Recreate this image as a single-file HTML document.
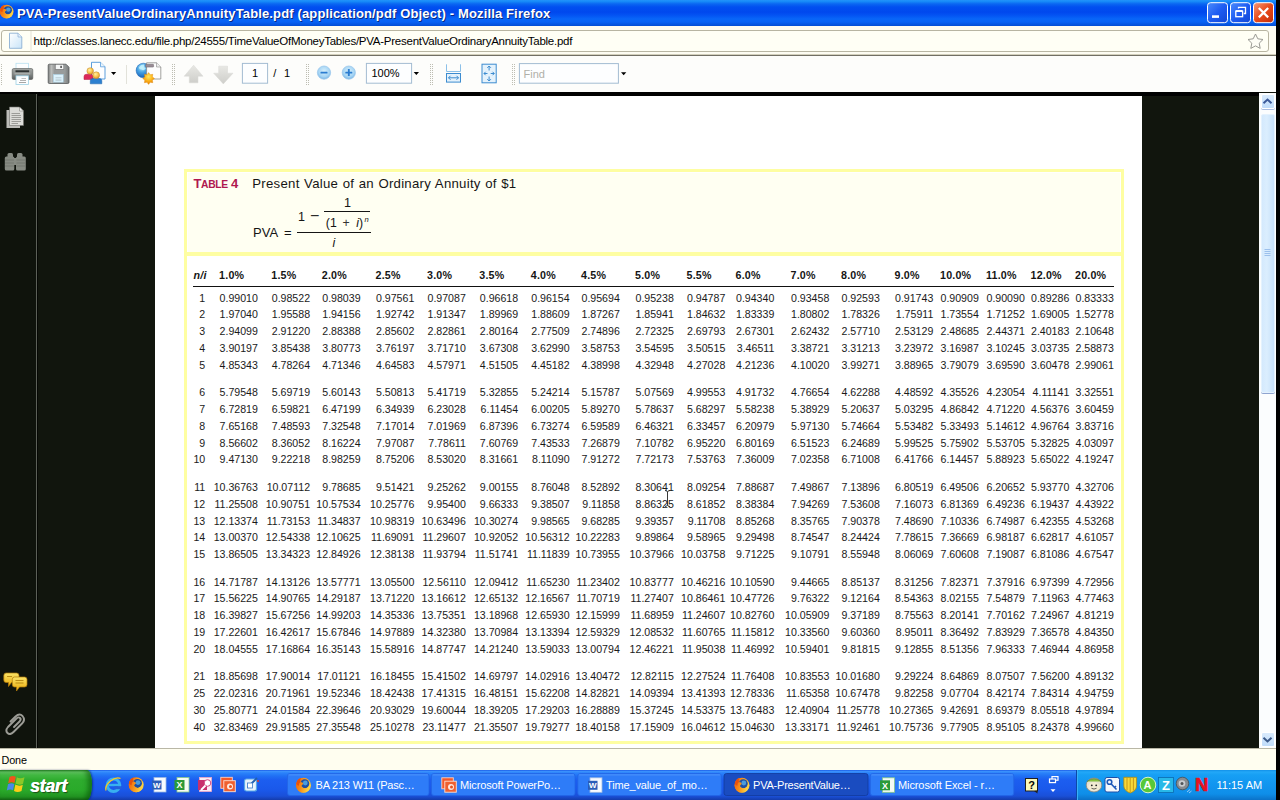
<!DOCTYPE html>
<html><head><meta charset="utf-8"><title>PVA-PresentValueOrdinaryAnnuityTable.pdf (application/pdf Object) - Mozilla Firefox</title>
<style>
*{box-sizing:border-box;margin:0;padding:0}
html,body{width:1280px;height:800px;overflow:hidden;background:#000;font-family:"Liberation Sans",sans-serif}
#root{position:absolute;left:0;top:0;width:1280px;height:800px;overflow:hidden;background:#000}
.abs{position:absolute}
svg{position:absolute;overflow:visible}
#titlebar{left:0;top:0;width:1276px;height:25.5px;background:linear-gradient(#2294fa 0,#178af8 1.5px,#0a66f2 4px,#0150f0 7px,#0048ee 12px,#0352f2 15px,#0866f8 19px,#0862f4 22px,#0450d8 25.5px)}
#title{left:17px;top:5.5px;color:#fff;font-weight:bold;font-size:13px;white-space:nowrap;line-height:16px;letter-spacing:0.14px;text-shadow:1px 1px 0 #0a2a80}
#urlbar{left:0;top:25.5px;width:1276px;height:30.5px;background:#fdfcf2;border-bottom:1.5px solid #716f64;box-shadow:inset 0 -1px 0 #d2cfbc}
#urlfield{left:1px;top:4.5px;width:1268px;height:22px;border:1px solid #b8b5a2;background:#fffff5;border-radius:3px}
#url{left:33.5px;top:8.5px;font-size:11.5px;color:#000;white-space:nowrap;line-height:14px;letter-spacing:-0.25px}
#toolbar{left:0;top:56px;width:1276px;height:36px;background:#fdfdfb}
#content{left:0;top:92px;width:1276px;height:656px;background:#11150d}
#page{left:154.8px;top:3.7px;width:986.9px;height:652.3px;background:#fff}
#status{left:0;top:748px;width:1276px;height:22px;background:#fffef0;border-top:1px solid #b9b7a6}
#taskbar{left:0;top:770px;width:1276px;height:30px;background:linear-gradient(#1c5ce8 0,#3a90fc 1.5px,#2a82fa 3px,#2070f4 6px,#1c5ef0 10px,#1a58ea 20px,#1a50d8 26px,#143cac 30px)}
/* pdf */
.ybox{left:184px;top:168.8px;width:940px;height:575.2px;border:3.8px solid #fefea2;background:#fff}
.yhead{left:187.8px;top:172.6px;width:932.4px;height:80px;background:#fffff2}
.yband{left:184px;top:252px;width:940px;height:4px;background:#fefea2}
.hdr{position:absolute;left:0;top:0}
.h{position:absolute;top:268px;font-weight:bold;font-size:10.7px;line-height:15px;white-space:nowrap;color:#151515;letter-spacing:0.2px}
.rule{position:absolute;left:192.5px;top:285.7px;width:921px;height:1.3px;background:#111}
.r{position:absolute;left:0;width:1280px;height:15px;font-size:10.6px;line-height:15px;color:#1a1a1a}
.r span{position:absolute;top:0;white-space:nowrap;text-align:right}
.r .n{left:165.2px;width:40px}
.r .v{width:60px}
.t{position:absolute;white-space:nowrap;line-height:1}
.tb{font-size:11px;color:#fff;line-height:12px}
</style></head><body><div id="root">
<div id="titlebar" class="abs"><div id="title" class="abs">PVA-PresentValueOrdinaryAnnuityTable.pdf (application/pdf Object) - Mozilla Firefox</div></div>
<div id="urlbar" class="abs"><div id="urlfield" class="abs"></div><div id="url" class="abs">http://classes.lanecc.edu/file.php/24555/TimeValueOfMoneyTables/PVA-PresentValueOrdinaryAnnuityTable.pdf</div></div>
<div id="toolbar" class="abs"><svg width="1276" height="36" viewBox="0 56 1276 36" style="left:0;top:0">
<defs>
<linearGradient id="gbody" x1="0" y1="0" x2="0" y2="1"><stop offset="0" stop-color="#a4a8a6"/><stop offset="0.5" stop-color="#868a89"/><stop offset="1" stop-color="#585c5c"/></linearGradient>
<linearGradient id="gflop" x1="0" y1="0" x2="1" y2="0"><stop offset="0" stop-color="#7c7e7e"/><stop offset="0.15" stop-color="#bcbebc"/><stop offset="0.3" stop-color="#989a9a"/><stop offset="0.8" stop-color="#989c9c"/><stop offset="1" stop-color="#787a7a"/></linearGradient>
<radialGradient id="gglobe" cx="0.4" cy="0.3" r="0.7"><stop offset="0" stop-color="#b8ecfc"/><stop offset="0.45" stop-color="#48a4e4"/><stop offset="1" stop-color="#1660b8"/></radialGradient>
<radialGradient id="gstar" cx="0.5" cy="0.35" r="0.6"><stop offset="0" stop-color="#ffe860"/><stop offset="0.6" stop-color="#fbb018"/><stop offset="1" stop-color="#e88808"/></radialGradient>
<radialGradient id="ghead" cx="0.4" cy="0.35" r="0.7"><stop offset="0" stop-color="#fff0a0"/><stop offset="0.6" stop-color="#f8c048"/><stop offset="1" stop-color="#d89028"/></radialGradient>
<radialGradient id="gzoom" cx="0.5" cy="0.4" r="0.6"><stop offset="0" stop-color="#d8f0fc"/><stop offset="0.7" stop-color="#a4d4f4"/><stop offset="1" stop-color="#78b4e4"/></radialGradient>
<linearGradient id="garr" x1="0" y1="0" x2="0" y2="1"><stop offset="0" stop-color="#e8e8e4"/><stop offset="1" stop-color="#cececa"/></linearGradient>
<pattern id="grip" width="2" height="2" patternUnits="userSpaceOnUse"><rect width="1" height="1" fill="#b8b8ae"/></pattern>
</defs>
<!-- grips -->
<g fill="#bdbdb2">
<g id="gp"><rect x="1" y="64" width="1" height="1"/><rect x="1" y="66" width="1" height="1"/><rect x="1" y="68" width="1" height="1"/><rect x="1" y="70" width="1" height="1"/><rect x="1" y="72" width="1" height="1"/><rect x="1" y="74" width="1" height="1"/><rect x="1" y="76" width="1" height="1"/><rect x="1" y="78" width="1" height="1"/><rect x="1" y="80" width="1" height="1"/><rect x="1" y="82" width="1" height="1"/><rect x="1" y="84" width="1" height="1"/></g>
<use href="#gp" x="171"/><use href="#gp" x="173"/><use href="#gp" x="305"/><use href="#gp" x="307"/><use href="#gp" x="429"/><use href="#gp" x="431"/><use href="#gp" x="511"/><use href="#gp" x="513"/>
</g>
<!-- printer -->
<rect x="16" y="63.3" width="12.4" height="7" fill="#fdfeff" stroke="#b8e0f0" stroke-width="0.8"/>
<rect x="12.2" y="68.5" width="20.6" height="11" rx="1.5" fill="url(#gbody)" stroke="#555958" stroke-width="0.6"/>
<rect x="15.5" y="70.3" width="13.6" height="2.2" fill="#2e3232"/>
<rect x="14.5" y="72.5" width="15.8" height="2" fill="#a8acaa"/>
<rect x="16" y="75.8" width="12.4" height="8.7" fill="#fdfeff" stroke="#9cd0e4" stroke-width="0.8"/>
<rect x="21.5" y="78" width="4.5" height="0.8" fill="#b0b0b0"/><rect x="20" y="80" width="6" height="0.8" fill="#a0a0a0"/><rect x="19" y="82" width="7" height="0.8" fill="#909090"/>
<!-- floppy -->
<path d="M49.2 64.2 H66 L69 67.2 V82.3 Q69 83.5 67.8 83.5 H49.2 Q48.2 83.5 48.2 82.3 V65.4 Q48.2 64.2 49.2 64.2Z" fill="url(#gflop)" stroke="#55595a" stroke-width="0.8"/>
<rect x="55.3" y="64.4" width="8.5" height="4.9" fill="#f4f6f6" stroke="#666" stroke-width="0.5"/><rect x="60.3" y="65.8" width="1.6" height="2.2" fill="#555"/>
<rect x="53.4" y="74.5" width="9.8" height="7.6" fill="#dcf2fc" stroke="#a8d4ec" stroke-width="0.5"/><rect x="55.5" y="77.5" width="6" height="0.7" fill="#a8b8c0"/><rect x="55.5" y="79.7" width="6" height="0.7" fill="#98a8b0"/>
<!-- people+doc -->
<path d="M91.5 62.3 H100.5 L105 66.8 V79 H91.5Z" fill="#fdfeff" stroke="#4a94d8" stroke-width="0.9"/><path d="M100.5 62.3 V66.8 H105" fill="#e8f4fc" stroke="#4a94d8" stroke-width="0.7"/>
<path d="M84 79.5 V76.5 Q84 74.3 86.5 74.3 H91 Q93 74.3 93 76.5 V79.5Z" fill="#dc2858" stroke="#b01840" stroke-width="0.5"/>
<circle cx="90.2" cy="71" r="3.3" fill="url(#ghead)" stroke="#c08830" stroke-width="0.5"/>
<path d="M90.3 83.8 V80.8 Q90.3 78.6 92.8 78.6 H99.5 Q101.8 78.6 101.8 80.8 V83.8Z" fill="#2c80d0" stroke="#1860a8" stroke-width="0.5"/>
<circle cx="96.2" cy="75.2" r="3.4" fill="url(#ghead)" stroke="#c08830" stroke-width="0.5"/>
<path d="M111 72 H116.2 L113.6 75Z" fill="#000"/>
<rect x="126" y="65" width="1" height="19" fill="#e2e2da"/>
<!-- globe/window/star -->
<circle cx="143.4" cy="70.5" r="7.3" fill="url(#gglobe)" stroke="#1a60b0" stroke-width="0.5"/>
<path d="M138.8 67.4 q2.200-3.300 5.500-2.800 q-1 2.800 1.500 3.800 q-2 2.800-4.300 1.200 q-2.200 0-2.700-2.200z" fill="#c8f4fc" opacity="0.8"/>
<path d="M146.6 62.8 H156.5 L160.8 67 V79 H146.6Z" fill="#fefefe" stroke="#8a8a88" stroke-width="0.8"/><path d="M156.5 62.8 V67 H160.8" fill="#eee" stroke="#8a8a88" stroke-width="0.6"/>
<rect x="145.6" y="64.3" width="8" height="2.8" rx="0.6" fill="#9a8c96" stroke="#6a6468" stroke-width="0.5"/>
<path d="M148.6 72.6 l1.6 2.1 2.6-0.4 -0.4 2.6 2.1 1.6 -2.1 1.6 0.4 2.6 -2.6-0.4 -1.6 2.1 -1.6-2.1 -2.6 0.4 0.4-2.6 -2.1-1.6 2.1-1.6 -0.4-2.6 2.6 0.4z" fill="url(#gstar)" stroke="#e08808" stroke-width="0.4"/>
<!-- arrows up/down -->
<path d="M193.6 65.2 L203 76.2 H198 V82.8 H189.3 V76.2 H184.2Z" fill="url(#garr)" stroke="#d8d8d4" stroke-width="0.5"/>
<path d="M223.3 83.9 L233 73.2 H227.5 V66.2 H218.7 V73.2 H213.7Z" fill="url(#garr)" stroke="#d8d8d4" stroke-width="0.5"/>
<!-- page box -->
<rect x="242.4" y="63.4" width="25.2" height="19.8" fill="#fdfeff" stroke="#a3bcd2" stroke-width="1"/>
<!-- zoom circles -->
<circle cx="324" cy="72.6" r="6.6" fill="url(#gzoom)" stroke="#9cc8ec" stroke-width="0.8"/><rect x="320.5" y="71.7" width="7" height="1.9" rx="0.5" fill="#2a7cd0"/>
<circle cx="348.8" cy="72.6" r="6.6" fill="url(#gzoom)" stroke="#9cc8ec" stroke-width="0.8"/><rect x="345.3" y="71.7" width="7" height="1.9" rx="0.5" fill="#2a7cd0"/><rect x="347.85" y="69.1" width="1.9" height="7" rx="0.5" fill="#2a7cd0"/>
<!-- zoom box -->
<rect x="366.4" y="63.4" width="45.2" height="19.8" fill="#fdfeff" stroke="#a3bcd2" stroke-width="1"/>
<path d="M413.7 72 H419 L416.35 75Z" fill="#000"/>
<!-- fit width -->
<g stroke="#3c8cd0" fill="none" stroke-width="1"><path d="M446.5 64.3 V71.5 H460.5 V64.3" stroke="#8cc0e8"/><rect x="446.5" y="73.5" width="14" height="8.6" fill="#e4f2fc"/><path d="M448.5 77.8 H458.5 M450.5 75.8 L448.5 77.8 L450.5 79.8 M456.5 75.8 L458.5 77.8 L456.5 79.8"/></g>
<!-- fit page -->
<g stroke="#3c8cd0" fill="none" stroke-width="1"><rect x="482" y="64.2" width="14.2" height="18.6" fill="#e4f2fc"/><path d="M489.1 66 V70.5 M487.3 67.8 L489.1 66 L490.9 67.8 M489.1 81 V76.5 M487.3 79.2 L489.1 81 L490.9 79.2 M484 73.5 H487.5 M485.6 71.8 L484 73.5 L485.6 75.2 M494.2 73.5 H490.7 M492.6 71.8 L494.2 73.5 L492.6 75.2"/></g>
<!-- find box -->
<rect x="519.4" y="63.6" width="99" height="19.6" fill="#fdfeff" stroke="#a3bcd2" stroke-width="1"/>
<path d="M621 72.3 H626.3 L623.65 75.3Z" fill="#000"/>
</svg>
<div class="t" style="left:252px;top:10.3px;font-size:11px;color:#000;line-height:14px">1</div>
<div class="t" style="left:273.3px;top:10.3px;font-size:11px;color:#000;line-height:14px;word-spacing:4.5px">/ 1</div>
<div class="t" style="left:371.5px;top:10.3px;font-size:11px;color:#000;line-height:14px">100%</div>
<div class="t" style="left:523.5px;top:11px;font-size:11px;color:#b0b0a8;line-height:14px">Find</div>
</div>
<div id="content" class="abs"><div id="page" class="abs"></div><div class="abs" style="left:0;top:0;width:36px;height:656px;background:#0f130c"></div>
<div class="abs" style="left:36px;top:0;width:1px;height:656px;background:#5c6058"></div>
<div class="abs" style="left:37px;top:0;width:1222px;height:3.7px;background:#000"></div><div class="abs" style="left:0;top:0;width:37px;height:1.5px;background:#000"></div><div class="abs" style="left:37px;top:0;width:1px;height:656px;background:#050704"></div>
<svg width="36" height="656" viewBox="0 92 36 656" style="left:0;top:0">
<!-- pages -->
<path d="M6.5 110 H17 L20 113 V128 H6.5Z" fill="#bcbcb8"/>
<path d="M9.5 107 H19.5 L23.5 111 V125.5 H9.5Z" fill="#dcdcd8" stroke="#70706c" stroke-width="0.6"/>
<path d="M19.5 107 V111 H23.5Z" fill="#f4f4f0" stroke="#70706c" stroke-width="0.5"/>
<g stroke="#8c8c88" stroke-width="0.8"><path d="M11.5 113.5H20M11.5 115.5H21M11.5 117.5H21M11.5 119.5H21M11.5 121.5H21M11.5 123.5H18"/></g>
<!-- binoculars -->
<g fill="#878b83">
<rect x="7.5" y="153" width="5.5" height="5" rx="1.5"/><rect x="17" y="153" width="5.5" height="5" rx="1.5"/>
<rect x="4.8" y="156.5" width="9.5" height="14" rx="1.5"/><rect x="16" y="156.5" width="9.8" height="14" rx="1.5"/>
<rect x="13" y="158" width="4" height="7"/>
</g>
<g stroke="#6c7068" stroke-width="0.7"><path d="M5 160H14M5 163H14M5 166H14M16.5 160H25.5M16.5 163H25.5M16.5 166H25.5"/></g>
<!-- comments -->
<defs><linearGradient id="gcm" x1="0" y1="0" x2="0" y2="1"><stop offset="0" stop-color="#fce468"/><stop offset="1" stop-color="#e8a808"/></linearGradient></defs>
<path d="M6 673 H16.5 Q19 673 19 675.5 V680 Q19 682.5 16.5 682.5 H11.5 L8.5 686.5 V682.5 H6 Q3.8 682.5 3.8 680 V675.5 Q3.8 673 6 673Z" fill="url(#gcm)" stroke="#b07808" stroke-width="0.7"/>
<path d="M14.5 677 H24.5 Q27 677 27 679.5 V684.5 Q27 687 24.5 687 H19.5 L16.5 691 V687 H14.5 Q12.3 687 12.3 684.5 V679.5 Q12.3 677 14.5 677Z" fill="url(#gcm)" stroke="#b07808" stroke-width="0.7"/>
<path d="M15.5 680.5H23.5M15.5 683H23.5" stroke="#a87808" stroke-width="0.8"/>
<path d="M7 676.5H12" stroke="#a87808" stroke-width="0.8"/>
<!-- paperclip -->
<path d="M14 727 L19.5 721.5 Q21.5 719.5 20 718 Q18.5 716.5 16.500 718.5 L8 727 Q5 730.5 7.500 733 Q10 735.500 13.500 732 L22.500 723 Q25.500 719.500 22.500 716.000 Q19.500 713.000 15.500 716.500 L10.500 721.500" fill="none" stroke="#9c9c96" stroke-width="1.9" stroke-linecap="round"/>
</svg>
</div>
<div class="abs ybox"></div><div class="abs yhead"></div><div class="abs yband"></div>
<div id="pdf" class="abs" style="left:0;top:0">
<div class="t" id="tbl4" style="left:193.5px;top:176.5px;font-size:13px;font-weight:bold;color:#b0184f;line-height:14px;letter-spacing:-0.35px">T<span style="font-size:10.3px">ABLE</span> 4</div>
<div class="t" id="ttl" style="left:252.3px;top:176.5px;font-size:13.2px;color:#151515;line-height:14px;letter-spacing:0.26px;word-spacing:0.6px">Present Value of an Ordinary Annuity of $1</div>
<div class="t" id="pva" style="left:253px;top:226px;font-size:13px;color:#151515;line-height:14px;word-spacing:3px">PVA =</div>
<div class="abs" style="left:297px;top:231.7px;width:73.7px;height:1.4px;background:#151515"></div>
<div class="t" id="onem" style="left:298px;top:209.5px;font-size:12.6px;color:#151515;line-height:14px">1</div>
<div class="t" id="minus" style="left:310px;top:206.6px;font-size:16px;color:#2a2a2a;line-height:18px">−</div>
<div class="t" id="one" style="left:343.9px;top:196px;font-size:12.6px;color:#151515;line-height:14px">1</div>
<div class="abs" style="left:324.2px;top:210.8px;width:45.9px;height:1.4px;background:#151515"></div>
<div class="t" id="den" style="left:325.8px;top:215.5px;font-size:12.3px;color:#151515;line-height:14px">(1</div>
<div class="t" id="denp" style="left:342.5px;top:215.5px;font-size:12.3px;color:#333;line-height:14px">+</div>
<div class="t" id="deni2" style="left:356.3px;top:215.5px;font-size:12.3px;color:#151515;line-height:14px"><i>i</i>)</div>
<div class="t" id="denn" style="left:364.5px;top:215px;font-size:7.6px;color:#151515;line-height:10px;font-style:italic">n</div>
<div class="t" id="deni" style="left:332.5px;top:236px;font-size:12.3px;color:#151515;line-height:14px;font-style:italic">i</div>

<div class="hdr"><span class="h hi" style="left:193.5px"><i>n/i</i></span><span class="h" style="left:219.10px">1.0%</span><span class="h" style="left:271.25px">1.5%</span><span class="h" style="left:321.75px">2.0%</span><span class="h" style="left:375.50px">2.5%</span><span class="h" style="left:427.00px">3.0%</span><span class="h" style="left:479.30px">3.5%</span><span class="h" style="left:530.75px">4.0%</span><span class="h" style="left:581.00px">4.5%</span><span class="h" style="left:635.00px">5.0%</span><span class="h" style="left:686.50px">5.5%</span><span class="h" style="left:735.50px">6.0%</span><span class="h" style="left:790.50px">7.0%</span><span class="h" style="left:841.00px">8.0%</span><span class="h" style="left:894.50px">9.0%</span><span class="h" style="left:940.00px">10.0%</span><span class="h" style="left:986.00px">11.0%</span><span class="h" style="left:1030.50px">12.0%</span><span class="h" style="left:1075.00px">20.0%</span></div>
<div class="rule"></div>
<div class="r" style="top:291.00px"><span class="n">1</span><span class="v" style="left:197.90px">0.99010</span><span class="v" style="left:250.05px">0.98522</span><span class="v" style="left:300.55px">0.98039</span><span class="v" style="left:354.30px">0.97561</span><span class="v" style="left:405.80px">0.97087</span><span class="v" style="left:458.10px">0.96618</span><span class="v" style="left:509.55px">0.96154</span><span class="v" style="left:559.80px">0.95694</span><span class="v" style="left:613.80px">0.95238</span><span class="v" style="left:665.30px">0.94787</span><span class="v" style="left:714.30px">0.94340</span><span class="v" style="left:769.30px">0.93458</span><span class="v" style="left:819.80px">0.92593</span><span class="v" style="left:873.30px">0.91743</span><span class="v" style="left:918.80px">0.90909</span><span class="v" style="left:964.80px">0.90090</span><span class="v" style="left:1009.30px">0.89286</span><span class="v" style="left:1053.80px">0.83333</span></div>
<div class="r" style="top:307.00px"><span class="n">2</span><span class="v" style="left:197.90px">1.97040</span><span class="v" style="left:250.05px">1.95588</span><span class="v" style="left:300.55px">1.94156</span><span class="v" style="left:354.30px">1.92742</span><span class="v" style="left:405.80px">1.91347</span><span class="v" style="left:458.10px">1.89969</span><span class="v" style="left:509.55px">1.88609</span><span class="v" style="left:559.80px">1.87267</span><span class="v" style="left:613.80px">1.85941</span><span class="v" style="left:665.30px">1.84632</span><span class="v" style="left:714.30px">1.83339</span><span class="v" style="left:769.30px">1.80802</span><span class="v" style="left:819.80px">1.78326</span><span class="v" style="left:873.30px">1.75911</span><span class="v" style="left:918.80px">1.73554</span><span class="v" style="left:964.80px">1.71252</span><span class="v" style="left:1009.30px">1.69005</span><span class="v" style="left:1053.80px">1.52778</span></div>
<div class="r" style="top:324.00px"><span class="n">3</span><span class="v" style="left:197.90px">2.94099</span><span class="v" style="left:250.05px">2.91220</span><span class="v" style="left:300.55px">2.88388</span><span class="v" style="left:354.30px">2.85602</span><span class="v" style="left:405.80px">2.82861</span><span class="v" style="left:458.10px">2.80164</span><span class="v" style="left:509.55px">2.77509</span><span class="v" style="left:559.80px">2.74896</span><span class="v" style="left:613.80px">2.72325</span><span class="v" style="left:665.30px">2.69793</span><span class="v" style="left:714.30px">2.67301</span><span class="v" style="left:769.30px">2.62432</span><span class="v" style="left:819.80px">2.57710</span><span class="v" style="left:873.30px">2.53129</span><span class="v" style="left:918.80px">2.48685</span><span class="v" style="left:964.80px">2.44371</span><span class="v" style="left:1009.30px">2.40183</span><span class="v" style="left:1053.80px">2.10648</span></div>
<div class="r" style="top:341.00px"><span class="n">4</span><span class="v" style="left:197.90px">3.90197</span><span class="v" style="left:250.05px">3.85438</span><span class="v" style="left:300.55px">3.80773</span><span class="v" style="left:354.30px">3.76197</span><span class="v" style="left:405.80px">3.71710</span><span class="v" style="left:458.10px">3.67308</span><span class="v" style="left:509.55px">3.62990</span><span class="v" style="left:559.80px">3.58753</span><span class="v" style="left:613.80px">3.54595</span><span class="v" style="left:665.30px">3.50515</span><span class="v" style="left:714.30px">3.46511</span><span class="v" style="left:769.30px">3.38721</span><span class="v" style="left:819.80px">3.31213</span><span class="v" style="left:873.30px">3.23972</span><span class="v" style="left:918.80px">3.16987</span><span class="v" style="left:964.80px">3.10245</span><span class="v" style="left:1009.30px">3.03735</span><span class="v" style="left:1053.80px">2.58873</span></div>
<div class="r" style="top:358.00px"><span class="n">5</span><span class="v" style="left:197.90px">4.85343</span><span class="v" style="left:250.05px">4.78264</span><span class="v" style="left:300.55px">4.71346</span><span class="v" style="left:354.30px">4.64583</span><span class="v" style="left:405.80px">4.57971</span><span class="v" style="left:458.10px">4.51505</span><span class="v" style="left:509.55px">4.45182</span><span class="v" style="left:559.80px">4.38998</span><span class="v" style="left:613.80px">4.32948</span><span class="v" style="left:665.30px">4.27028</span><span class="v" style="left:714.30px">4.21236</span><span class="v" style="left:769.30px">4.10020</span><span class="v" style="left:819.80px">3.99271</span><span class="v" style="left:873.30px">3.88965</span><span class="v" style="left:918.80px">3.79079</span><span class="v" style="left:964.80px">3.69590</span><span class="v" style="left:1009.30px">3.60478</span><span class="v" style="left:1053.80px">2.99061</span></div>
<div class="r" style="top:385.00px"><span class="n">6</span><span class="v" style="left:197.90px">5.79548</span><span class="v" style="left:250.05px">5.69719</span><span class="v" style="left:300.55px">5.60143</span><span class="v" style="left:354.30px">5.50813</span><span class="v" style="left:405.80px">5.41719</span><span class="v" style="left:458.10px">5.32855</span><span class="v" style="left:509.55px">5.24214</span><span class="v" style="left:559.80px">5.15787</span><span class="v" style="left:613.80px">5.07569</span><span class="v" style="left:665.30px">4.99553</span><span class="v" style="left:714.30px">4.91732</span><span class="v" style="left:769.30px">4.76654</span><span class="v" style="left:819.80px">4.62288</span><span class="v" style="left:873.30px">4.48592</span><span class="v" style="left:918.80px">4.35526</span><span class="v" style="left:964.80px">4.23054</span><span class="v" style="left:1009.30px">4.11141</span><span class="v" style="left:1053.80px">3.32551</span></div>
<div class="r" style="top:402.00px"><span class="n">7</span><span class="v" style="left:197.90px">6.72819</span><span class="v" style="left:250.05px">6.59821</span><span class="v" style="left:300.55px">6.47199</span><span class="v" style="left:354.30px">6.34939</span><span class="v" style="left:405.80px">6.23028</span><span class="v" style="left:458.10px">6.11454</span><span class="v" style="left:509.55px">6.00205</span><span class="v" style="left:559.80px">5.89270</span><span class="v" style="left:613.80px">5.78637</span><span class="v" style="left:665.30px">5.68297</span><span class="v" style="left:714.30px">5.58238</span><span class="v" style="left:769.30px">5.38929</span><span class="v" style="left:819.80px">5.20637</span><span class="v" style="left:873.30px">5.03295</span><span class="v" style="left:918.80px">4.86842</span><span class="v" style="left:964.80px">4.71220</span><span class="v" style="left:1009.30px">4.56376</span><span class="v" style="left:1053.80px">3.60459</span></div>
<div class="r" style="top:419.00px"><span class="n">8</span><span class="v" style="left:197.90px">7.65168</span><span class="v" style="left:250.05px">7.48593</span><span class="v" style="left:300.55px">7.32548</span><span class="v" style="left:354.30px">7.17014</span><span class="v" style="left:405.80px">7.01969</span><span class="v" style="left:458.10px">6.87396</span><span class="v" style="left:509.55px">6.73274</span><span class="v" style="left:559.80px">6.59589</span><span class="v" style="left:613.80px">6.46321</span><span class="v" style="left:665.30px">6.33457</span><span class="v" style="left:714.30px">6.20979</span><span class="v" style="left:769.30px">5.97130</span><span class="v" style="left:819.80px">5.74664</span><span class="v" style="left:873.30px">5.53482</span><span class="v" style="left:918.80px">5.33493</span><span class="v" style="left:964.80px">5.14612</span><span class="v" style="left:1009.30px">4.96764</span><span class="v" style="left:1053.80px">3.83716</span></div>
<div class="r" style="top:436.00px"><span class="n">9</span><span class="v" style="left:197.90px">8.56602</span><span class="v" style="left:250.05px">8.36052</span><span class="v" style="left:300.55px">8.16224</span><span class="v" style="left:354.30px">7.97087</span><span class="v" style="left:405.80px">7.78611</span><span class="v" style="left:458.10px">7.60769</span><span class="v" style="left:509.55px">7.43533</span><span class="v" style="left:559.80px">7.26879</span><span class="v" style="left:613.80px">7.10782</span><span class="v" style="left:665.30px">6.95220</span><span class="v" style="left:714.30px">6.80169</span><span class="v" style="left:769.30px">6.51523</span><span class="v" style="left:819.80px">6.24689</span><span class="v" style="left:873.30px">5.99525</span><span class="v" style="left:918.80px">5.75902</span><span class="v" style="left:964.80px">5.53705</span><span class="v" style="left:1009.30px">5.32825</span><span class="v" style="left:1053.80px">4.03097</span></div>
<div class="r" style="top:452.00px"><span class="n">10</span><span class="v" style="left:197.90px">9.47130</span><span class="v" style="left:250.05px">9.22218</span><span class="v" style="left:300.55px">8.98259</span><span class="v" style="left:354.30px">8.75206</span><span class="v" style="left:405.80px">8.53020</span><span class="v" style="left:458.10px">8.31661</span><span class="v" style="left:509.55px">8.11090</span><span class="v" style="left:559.80px">7.91272</span><span class="v" style="left:613.80px">7.72173</span><span class="v" style="left:665.30px">7.53763</span><span class="v" style="left:714.30px">7.36009</span><span class="v" style="left:769.30px">7.02358</span><span class="v" style="left:819.80px">6.71008</span><span class="v" style="left:873.30px">6.41766</span><span class="v" style="left:918.80px">6.14457</span><span class="v" style="left:964.80px">5.88923</span><span class="v" style="left:1009.30px">5.65022</span><span class="v" style="left:1053.80px">4.19247</span></div>
<div class="r" style="top:480.00px"><span class="n">11</span><span class="v" style="left:197.90px">10.36763</span><span class="v" style="left:250.05px">10.07112</span><span class="v" style="left:300.55px">9.78685</span><span class="v" style="left:354.30px">9.51421</span><span class="v" style="left:405.80px">9.25262</span><span class="v" style="left:458.10px">9.00155</span><span class="v" style="left:509.55px">8.76048</span><span class="v" style="left:559.80px">8.52892</span><span class="v" style="left:613.80px">8.30641</span><span class="v" style="left:665.30px">8.09254</span><span class="v" style="left:714.30px">7.88687</span><span class="v" style="left:769.30px">7.49867</span><span class="v" style="left:819.80px">7.13896</span><span class="v" style="left:873.30px">6.80519</span><span class="v" style="left:918.80px">6.49506</span><span class="v" style="left:964.80px">6.20652</span><span class="v" style="left:1009.30px">5.93770</span><span class="v" style="left:1053.80px">4.32706</span></div>
<div class="r" style="top:497.00px"><span class="n">12</span><span class="v" style="left:197.90px">11.25508</span><span class="v" style="left:250.05px">10.90751</span><span class="v" style="left:300.55px">10.57534</span><span class="v" style="left:354.30px">10.25776</span><span class="v" style="left:405.80px">9.95400</span><span class="v" style="left:458.10px">9.66333</span><span class="v" style="left:509.55px">9.38507</span><span class="v" style="left:559.80px">9.11858</span><span class="v" style="left:613.80px">8.86325</span><span class="v" style="left:665.30px">8.61852</span><span class="v" style="left:714.30px">8.38384</span><span class="v" style="left:769.30px">7.94269</span><span class="v" style="left:819.80px">7.53608</span><span class="v" style="left:873.30px">7.16073</span><span class="v" style="left:918.80px">6.81369</span><span class="v" style="left:964.80px">6.49236</span><span class="v" style="left:1009.30px">6.19437</span><span class="v" style="left:1053.80px">4.43922</span></div>
<div class="r" style="top:514.00px"><span class="n">13</span><span class="v" style="left:197.90px">12.13374</span><span class="v" style="left:250.05px">11.73153</span><span class="v" style="left:300.55px">11.34837</span><span class="v" style="left:354.30px">10.98319</span><span class="v" style="left:405.80px">10.63496</span><span class="v" style="left:458.10px">10.30274</span><span class="v" style="left:509.55px">9.98565</span><span class="v" style="left:559.80px">9.68285</span><span class="v" style="left:613.80px">9.39357</span><span class="v" style="left:665.30px">9.11708</span><span class="v" style="left:714.30px">8.85268</span><span class="v" style="left:769.30px">8.35765</span><span class="v" style="left:819.80px">7.90378</span><span class="v" style="left:873.30px">7.48690</span><span class="v" style="left:918.80px">7.10336</span><span class="v" style="left:964.80px">6.74987</span><span class="v" style="left:1009.30px">6.42355</span><span class="v" style="left:1053.80px">4.53268</span></div>
<div class="r" style="top:530.00px"><span class="n">14</span><span class="v" style="left:197.90px">13.00370</span><span class="v" style="left:250.05px">12.54338</span><span class="v" style="left:300.55px">12.10625</span><span class="v" style="left:354.30px">11.69091</span><span class="v" style="left:405.80px">11.29607</span><span class="v" style="left:458.10px">10.92052</span><span class="v" style="left:509.55px">10.56312</span><span class="v" style="left:559.80px">10.22283</span><span class="v" style="left:613.80px">9.89864</span><span class="v" style="left:665.30px">9.58965</span><span class="v" style="left:714.30px">9.29498</span><span class="v" style="left:769.30px">8.74547</span><span class="v" style="left:819.80px">8.24424</span><span class="v" style="left:873.30px">7.78615</span><span class="v" style="left:918.80px">7.36669</span><span class="v" style="left:964.80px">6.98187</span><span class="v" style="left:1009.30px">6.62817</span><span class="v" style="left:1053.80px">4.61057</span></div>
<div class="r" style="top:547.00px"><span class="n">15</span><span class="v" style="left:197.90px">13.86505</span><span class="v" style="left:250.05px">13.34323</span><span class="v" style="left:300.55px">12.84926</span><span class="v" style="left:354.30px">12.38138</span><span class="v" style="left:405.80px">11.93794</span><span class="v" style="left:458.10px">11.51741</span><span class="v" style="left:509.55px">11.11839</span><span class="v" style="left:559.80px">10.73955</span><span class="v" style="left:613.80px">10.37966</span><span class="v" style="left:665.30px">10.03758</span><span class="v" style="left:714.30px">9.71225</span><span class="v" style="left:769.30px">9.10791</span><span class="v" style="left:819.80px">8.55948</span><span class="v" style="left:873.30px">8.06069</span><span class="v" style="left:918.80px">7.60608</span><span class="v" style="left:964.80px">7.19087</span><span class="v" style="left:1009.30px">6.81086</span><span class="v" style="left:1053.80px">4.67547</span></div>
<div class="r" style="top:575.00px"><span class="n">16</span><span class="v" style="left:197.90px">14.71787</span><span class="v" style="left:250.05px">14.13126</span><span class="v" style="left:300.55px">13.57771</span><span class="v" style="left:354.30px">13.05500</span><span class="v" style="left:405.80px">12.56110</span><span class="v" style="left:458.10px">12.09412</span><span class="v" style="left:509.55px">11.65230</span><span class="v" style="left:559.80px">11.23402</span><span class="v" style="left:613.80px">10.83777</span><span class="v" style="left:665.30px">10.46216</span><span class="v" style="left:714.30px">10.10590</span><span class="v" style="left:769.30px">9.44665</span><span class="v" style="left:819.80px">8.85137</span><span class="v" style="left:873.30px">8.31256</span><span class="v" style="left:918.80px">7.82371</span><span class="v" style="left:964.80px">7.37916</span><span class="v" style="left:1009.30px">6.97399</span><span class="v" style="left:1053.80px">4.72956</span></div>
<div class="r" style="top:591.00px"><span class="n">17</span><span class="v" style="left:197.90px">15.56225</span><span class="v" style="left:250.05px">14.90765</span><span class="v" style="left:300.55px">14.29187</span><span class="v" style="left:354.30px">13.71220</span><span class="v" style="left:405.80px">13.16612</span><span class="v" style="left:458.10px">12.65132</span><span class="v" style="left:509.55px">12.16567</span><span class="v" style="left:559.80px">11.70719</span><span class="v" style="left:613.80px">11.27407</span><span class="v" style="left:665.30px">10.86461</span><span class="v" style="left:714.30px">10.47726</span><span class="v" style="left:769.30px">9.76322</span><span class="v" style="left:819.80px">9.12164</span><span class="v" style="left:873.30px">8.54363</span><span class="v" style="left:918.80px">8.02155</span><span class="v" style="left:964.80px">7.54879</span><span class="v" style="left:1009.30px">7.11963</span><span class="v" style="left:1053.80px">4.77463</span></div>
<div class="r" style="top:608.00px"><span class="n">18</span><span class="v" style="left:197.90px">16.39827</span><span class="v" style="left:250.05px">15.67256</span><span class="v" style="left:300.55px">14.99203</span><span class="v" style="left:354.30px">14.35336</span><span class="v" style="left:405.80px">13.75351</span><span class="v" style="left:458.10px">13.18968</span><span class="v" style="left:509.55px">12.65930</span><span class="v" style="left:559.80px">12.15999</span><span class="v" style="left:613.80px">11.68959</span><span class="v" style="left:665.30px">11.24607</span><span class="v" style="left:714.30px">10.82760</span><span class="v" style="left:769.30px">10.05909</span><span class="v" style="left:819.80px">9.37189</span><span class="v" style="left:873.30px">8.75563</span><span class="v" style="left:918.80px">8.20141</span><span class="v" style="left:964.80px">7.70162</span><span class="v" style="left:1009.30px">7.24967</span><span class="v" style="left:1053.80px">4.81219</span></div>
<div class="r" style="top:625.00px"><span class="n">19</span><span class="v" style="left:197.90px">17.22601</span><span class="v" style="left:250.05px">16.42617</span><span class="v" style="left:300.55px">15.67846</span><span class="v" style="left:354.30px">14.97889</span><span class="v" style="left:405.80px">14.32380</span><span class="v" style="left:458.10px">13.70984</span><span class="v" style="left:509.55px">13.13394</span><span class="v" style="left:559.80px">12.59329</span><span class="v" style="left:613.80px">12.08532</span><span class="v" style="left:665.30px">11.60765</span><span class="v" style="left:714.30px">11.15812</span><span class="v" style="left:769.30px">10.33560</span><span class="v" style="left:819.80px">9.60360</span><span class="v" style="left:873.30px">8.95011</span><span class="v" style="left:918.80px">8.36492</span><span class="v" style="left:964.80px">7.83929</span><span class="v" style="left:1009.30px">7.36578</span><span class="v" style="left:1053.80px">4.84350</span></div>
<div class="r" style="top:642.00px"><span class="n">20</span><span class="v" style="left:197.90px">18.04555</span><span class="v" style="left:250.05px">17.16864</span><span class="v" style="left:300.55px">16.35143</span><span class="v" style="left:354.30px">15.58916</span><span class="v" style="left:405.80px">14.87747</span><span class="v" style="left:458.10px">14.21240</span><span class="v" style="left:509.55px">13.59033</span><span class="v" style="left:559.80px">13.00794</span><span class="v" style="left:613.80px">12.46221</span><span class="v" style="left:665.30px">11.95038</span><span class="v" style="left:714.30px">11.46992</span><span class="v" style="left:769.30px">10.59401</span><span class="v" style="left:819.80px">9.81815</span><span class="v" style="left:873.30px">9.12855</span><span class="v" style="left:918.80px">8.51356</span><span class="v" style="left:964.80px">7.96333</span><span class="v" style="left:1009.30px">7.46944</span><span class="v" style="left:1053.80px">4.86958</span></div>
<div class="r" style="top:669.00px"><span class="n">21</span><span class="v" style="left:197.90px">18.85698</span><span class="v" style="left:250.05px">17.90014</span><span class="v" style="left:300.55px">17.01121</span><span class="v" style="left:354.30px">16.18455</span><span class="v" style="left:405.80px">15.41502</span><span class="v" style="left:458.10px">14.69797</span><span class="v" style="left:509.55px">14.02916</span><span class="v" style="left:559.80px">13.40472</span><span class="v" style="left:613.80px">12.82115</span><span class="v" style="left:665.30px">12.27524</span><span class="v" style="left:714.30px">11.76408</span><span class="v" style="left:769.30px">10.83553</span><span class="v" style="left:819.80px">10.01680</span><span class="v" style="left:873.30px">9.29224</span><span class="v" style="left:918.80px">8.64869</span><span class="v" style="left:964.80px">8.07507</span><span class="v" style="left:1009.30px">7.56200</span><span class="v" style="left:1053.80px">4.89132</span></div>
<div class="r" style="top:686.00px"><span class="n">25</span><span class="v" style="left:197.90px">22.02316</span><span class="v" style="left:250.05px">20.71961</span><span class="v" style="left:300.55px">19.52346</span><span class="v" style="left:354.30px">18.42438</span><span class="v" style="left:405.80px">17.41315</span><span class="v" style="left:458.10px">16.48151</span><span class="v" style="left:509.55px">15.62208</span><span class="v" style="left:559.80px">14.82821</span><span class="v" style="left:613.80px">14.09394</span><span class="v" style="left:665.30px">13.41393</span><span class="v" style="left:714.30px">12.78336</span><span class="v" style="left:769.30px">11.65358</span><span class="v" style="left:819.80px">10.67478</span><span class="v" style="left:873.30px">9.82258</span><span class="v" style="left:918.80px">9.07704</span><span class="v" style="left:964.80px">8.42174</span><span class="v" style="left:1009.30px">7.84314</span><span class="v" style="left:1053.80px">4.94759</span></div>
<div class="r" style="top:703.00px"><span class="n">30</span><span class="v" style="left:197.90px">25.80771</span><span class="v" style="left:250.05px">24.01584</span><span class="v" style="left:300.55px">22.39646</span><span class="v" style="left:354.30px">20.93029</span><span class="v" style="left:405.80px">19.60044</span><span class="v" style="left:458.10px">18.39205</span><span class="v" style="left:509.55px">17.29203</span><span class="v" style="left:559.80px">16.28889</span><span class="v" style="left:613.80px">15.37245</span><span class="v" style="left:665.30px">14.53375</span><span class="v" style="left:714.30px">13.76483</span><span class="v" style="left:769.30px">12.40904</span><span class="v" style="left:819.80px">11.25778</span><span class="v" style="left:873.30px">10.27365</span><span class="v" style="left:918.80px">9.42691</span><span class="v" style="left:964.80px">8.69379</span><span class="v" style="left:1009.30px">8.05518</span><span class="v" style="left:1053.80px">4.97894</span></div>
<div class="r" style="top:720.00px"><span class="n">40</span><span class="v" style="left:197.90px">32.83469</span><span class="v" style="left:250.05px">29.91585</span><span class="v" style="left:300.55px">27.35548</span><span class="v" style="left:354.30px">25.10278</span><span class="v" style="left:405.80px">23.11477</span><span class="v" style="left:458.10px">21.35507</span><span class="v" style="left:509.55px">19.79277</span><span class="v" style="left:559.80px">18.40158</span><span class="v" style="left:613.80px">17.15909</span><span class="v" style="left:665.30px">16.04612</span><span class="v" style="left:714.30px">15.04630</span><span class="v" style="left:769.30px">13.33171</span><span class="v" style="left:819.80px">11.92461</span><span class="v" style="left:873.30px">10.75736</span><span class="v" style="left:918.80px">9.77905</span><span class="v" style="left:964.80px">8.95105</span><span class="v" style="left:1009.30px">8.24378</span><span class="v" style="left:1053.80px">4.99660</span></div>
</div>
<svg width="1276" height="56" viewBox="0 0 1276 56" style="left:0;top:0">
<defs>
<linearGradient id="gwb" x1="0" y1="0" x2="1" y2="1"><stop offset="0" stop-color="#4c8cfc"/><stop offset="0.5" stop-color="#1e5cf2"/><stop offset="1" stop-color="#1246d4"/></linearGradient>
<linearGradient id="gwc" x1="0" y1="0" x2="1" y2="1"><stop offset="0" stop-color="#f69a78"/><stop offset="0.5" stop-color="#e84a1a"/><stop offset="1" stop-color="#c42c08"/></linearGradient>
<linearGradient id="gffb" x1="0" y1="0" x2="1" y2="0.3"><stop offset="0" stop-color="#ec5c0c"/><stop offset="0.5" stop-color="#f89018"/><stop offset="1" stop-color="#fcd040"/></linearGradient><linearGradient id="gpg" x1="0" y1="0" x2="1" y2="1"><stop offset="0" stop-color="#ffffff"/><stop offset="1" stop-color="#c8e4f8"/></linearGradient>
</defs>
<!-- firefox icon -->
<g transform="translate(-0.600,4.300) scale(0.91)"><circle cx="8" cy="8" r="7.500" fill="url(#gffb)"/><circle cx="9.300" cy="6.600" r="4.500" fill="#1d4fa4"/><circle cx="9.800" cy="5.800" r="2.400" fill="#4a9cdc"/><path d="M0.800 6.500 Q1.500 2 5.500 0.800 Q4 3 5 4.800 Q7.500 4.800 7.800 6.800 Q6 7.500 6 9 Q7.500 11.500 10.500 11 Q13.500 10.200 14 7 Q15.500 11 12.500 13.800 Q8.500 16.800 4 14.200 Q0 11.500 0.800 6.500Z" fill="url(#gffb)"/><path d="M0.800 6.500 Q1.500 2 5.500 0.800 Q4 3 5 4.800 Q3.300 5.500 3.300 8.500 Q1.500 8 0.800 6.500Z" fill="#e8500c"/></g>
<!-- window buttons -->
<rect x="1207.500" y="2.700" width="20" height="20" rx="3" fill="url(#gwb)" stroke="#fff" stroke-width="1"/>
<rect x="1212" y="15.300" width="7" height="2.600" fill="#fff"/>
<rect x="1230.500" y="2.700" width="20" height="20" rx="3" fill="url(#gwb)" stroke="#fff" stroke-width="1"/>
<g fill="none" stroke="#fff"><path d="M1238.500 8.500 V7.300 H1245.500 V13.500 H1243.800" stroke-width="1.300"/><rect x="1235.800" y="11.200" width="6.800" height="5.500" stroke-width="1.300"/><path d="M1235.800 11 H1242.600" stroke-width="1.800"/></g>
<rect x="1253.500" y="2.700" width="20" height="20" rx="3" fill="url(#gwc)" stroke="#fff" stroke-width="1"/>
<path d="M1258.800 8 L1268.200 17.400 M1268.200 8 L1258.800 17.400" stroke="#fff" stroke-width="2.200" stroke-linecap="butt"/>
<!-- url page icon -->
<path d="M9.500 33.200 H18 L21.800 37 V48.300 H9.500Z" fill="url(#gpg)" stroke="#8cb0d4" stroke-width="0.900"/><path d="M18 33.200 V37 H21.800" fill="#e4f0fc" stroke="#8cb0d4" stroke-width="0.700"/>
<rect x="30.500" y="31" width="1" height="21" fill="#e4e2d4"/>
<!-- star -->
<path d="M1255.500 34 L1257.800 38.800 L1263 39.500 L1259.200 43.200 L1260.200 48.400 L1255.500 45.900 L1250.800 48.400 L1251.800 43.200 L1248 39.500 L1253.200 38.800Z" fill="#fdfdf6" stroke="#9a9a94" stroke-width="1" stroke-linejoin="round"/>
</svg>
<!-- scrollbar -->
<div class="abs" style="left:1259px;top:92.500px;width:17px;height:655.500px;background:#fbfdfe"></div>
<div class="abs" style="left:1260.500px;top:93.500px;width:14px;height:15px;background:linear-gradient(#d8eafc,#c0dcfa);border:1px solid #fff;border-radius:2px;box-shadow:0 1px 0 #a8bce0"></div>
<div class="abs" style="left:1260.500px;top:113.500px;width:14px;height:279px;background:linear-gradient(90deg,#d4e9fd,#dbeefe 40%,#c6e0fa);border:1px solid #e4f2fe;border-radius:2px;box-shadow:0 1px 0 #8ea4d0"></div>
<div class="abs" style="left:1260.500px;top:732px;width:14px;height:15px;background:linear-gradient(#d8eafc,#c0dcfa);border:1px solid #fff;border-radius:2px"></div>
<svg width="17" height="656" viewBox="1259 92 17 656" style="left:1259px;top:92px">
<path d="M1263.500 103.200 L1267.500 99.500 L1271.500 103.200" fill="none" stroke="#3c5a9a" stroke-width="2"/>
<path d="M1263.500 737.800 L1267.500 741.500 L1271.500 737.800" fill="none" stroke="#3c5a8a" stroke-width="2"/>
<path d="M1264.500 249.500 H1270.500 M1264.500 251.500 H1270.500 M1264.500 253.500 H1270.500 M1264.500 255.500 H1270.500" stroke="#9cc0ec" stroke-width="1"/>
</svg>
<svg width="10" height="20" viewBox="663 489 10 20" style="left:663px;top:489px"><path d="M665 490.500 Q667 490.500 667.500 492 Q668 490.500 670 490.500 M667.500 492 V505 M665 506.500 Q667 506.500 667.500 505 Q668 506.500 670 506.500" stroke="#222" stroke-width="0.900" fill="none"/></svg>
<div id="status" class="abs"><div class="t" style="left:1.500px;top:3.500px;font-size:10.800px;color:#000;line-height:14px;letter-spacing:-0.1px">Done</div>
</div>
<div id="taskbar" class="abs"><div class="abs" id="traybg" style="left:1075.5px;top:0;width:200.5px;height:30px;background:linear-gradient(#1290e8 0,#22a8f8 2px,#169ff4 5px,#1296f0 14px,#0f8ee8 24px,#0b72c8 30px);border-left:1px solid #0c48a8;box-shadow:inset 1px 0 0 #38b0f8"></div>
<div class="abs" id="startbtn" style="left:0;top:0;width:91.5px;height:30px;border-radius:0 5px 5px 0/0 14px 16px 0;background:linear-gradient(#2c8a2c 0,#62c862 2px,#42b842 5px,#2eac2e 10px,#2aaa2a 20px,#229422 27px,#186c18 30px);box-shadow:inset -4px 0 5px rgba(0,70,0,.5),1px 0 2px rgba(0,20,80,.55)"></div>
<div class="t" id="starttxt" style="left:30px;top:5.5px;font-size:17.5px;font-weight:bold;font-style:italic;color:#fff;line-height:20px;letter-spacing:-0.2px;text-shadow:0.5px 0 0 #fff,1.3px 1.3px 1px #1a4a1a">start</div>
<svg width="1276" height="30" viewBox="0 770 1276 30" style="left:0;top:0">
<defs>
<radialGradient id="gff" cx="0.5" cy="0.45" r="0.6"><stop offset="0" stop-color="#4aa0e8"/><stop offset="0.55" stop-color="#2868c8"/><stop offset="0.6" stop-color="#f88818"/><stop offset="1" stop-color="#e84808"/></radialGradient>
<g id="ffico"><circle cx="8" cy="8" r="7.500" fill="url(#gffb)"/><circle cx="9.300" cy="6.600" r="4.500" fill="#1d4fa4"/><circle cx="9.800" cy="5.800" r="2.400" fill="#4a9cdc"/><path d="M0.800 6.500 Q1.500 2 5.500 0.800 Q4 3 5 4.800 Q7.500 4.800 7.800 6.800 Q6 7.500 6 9 Q7.500 11.500 10.500 11 Q13.500 10.200 14 7 Q15.500 11 12.500 13.800 Q8.500 16.800 4 14.200 Q0 11.500 0.800 6.500Z" fill="url(#gffb)"/><path d="M0.800 6.500 Q1.500 2 5.500 0.800 Q4 3 5 4.800 Q3.300 5.500 3.300 8.500 Q1.500 8 0.800 6.500Z" fill="#e8500c"/></g>
<g id="wordico"><rect x="2.5" y="0.5" width="12" height="14.5" fill="#f8fbff" stroke="#9cb8e0" stroke-width="0.8"/><rect x="0.5" y="3.500" width="9.500" height="9" fill="#2a5cb8"/><text x="5.2" y="11" font-family="Liberation Sans,sans-serif" font-weight="bold" font-size="8" fill="#fff" text-anchor="middle">W</text></g>
<g id="xlico"><rect x="3" y="0.5" width="12" height="14.5" fill="#f4fcf4" stroke="#88c888" stroke-width="0.8"/><rect x="0.5" y="3" width="10" height="10" fill="#2a9a38"/><text x="5.5" y="11.300" font-family="Liberation Sans,sans-serif" font-weight="bold" font-size="9" fill="#fff" text-anchor="middle">X</text></g>
<g id="pptico"><rect x="0.8" y="0.8" width="11.500" height="11" fill="#f4582a" stroke="#fcd0c0" stroke-width="0.9"/><rect x="3.800" y="4.200" width="11.500" height="11" fill="#f06030" stroke="#fce0d4" stroke-width="0.9"/><circle cx="10" cy="10" r="3" fill="#fce8e0"/><circle cx="10.5" cy="10" r="1.500" fill="#e85020"/></g>
</defs>
<!-- flag -->
<g>
<path d="M9.500 777 Q12.500 775 15.800 776.800 L14.500 783 Q11.500 781.300 8.200 783.300Z" fill="#f0541c"/>
<path d="M16.800 777.300 Q20 779.300 24.500 777.200 L23 783.800 Q19.500 785.800 15.500 783.600Z" fill="#8cc828"/>
<path d="M8 784.300 Q11.200 782.400 14.300 784 L13 790.300 Q10 788.600 6.800 790.600Z" fill="#4a88e8"/>
<path d="M15.300 784.600 Q19 786.800 22.800 784.800 L21.500 791 Q17.500 793.200 14 791Z" fill="#fccc18"/>
</g>
<!-- IE -->
<g transform="translate(105.500,777)"><circle cx="8" cy="8.200" r="6.300" fill="none" stroke="#38b0f0" stroke-width="3"/><rect x="3" y="6.800" width="11" height="2.400" fill="#38b0f0"/><rect x="9" y="9.200" width="7" height="3" fill="#245edb"/><path d="M0.500 13.500 Q-1 9 5 4 Q11 -0.500 15 1.500" fill="none" stroke="#f8c820" stroke-width="1.300"/></g>
<use href="#ffico" x="128.200" y="776.800"/>
<use href="#wordico" x="151.500" y="777"/>
<use href="#xlico" x="174" y="777"/>
<!-- access -->
<g transform="translate(197.500,777)"><rect x="2" y="0.500" width="12" height="14" fill="#fcecf4" stroke="#f0a8c8" stroke-width="0.800"/><rect x="0.500" y="3" width="9" height="10" fill="#c8306c"/><circle cx="10" cy="6" r="3.300" fill="#fff" stroke="#d04880" stroke-width="1"/><path d="M8 8.500 L3.500 13" stroke="#fff" stroke-width="1.800"/></g>
<use href="#pptico" x="220" y="776.500"/>
<!-- OE -->
<g transform="translate(243.500,777)"><rect x="1" y="2" width="12" height="12" rx="2" fill="#e8f4fc" stroke="#58a8e8" stroke-width="1.200"/><path d="M4 10.500 L11 3.500 L13.500 1 " stroke="#2060b0" stroke-width="1.800" fill="none"/><rect x="4" y="6" width="5" height="5" fill="#fff" stroke="#3878c8" stroke-width="0.800"/><circle cx="14.500" cy="4" r="1" fill="#e83818"/></g>
<!-- task buttons -->
<g id="tbs">
<rect x="287.500" y="773.500" width="141.500" height="22" rx="2.500" fill="#2e7cf8" stroke="#2264e4" stroke-width="0.800"/><rect x="288.500" y="774.300" width="139.500" height="1.200" fill="#5a9efc" opacity="0.6"/>
<rect x="431.500" y="773.500" width="143.500" height="22" rx="2.500" fill="#2e7cf8" stroke="#2264e4" stroke-width="0.800"/><rect x="432.500" y="774.300" width="141.500" height="1.200" fill="#5a9efc" opacity="0.6"/>
<rect x="577.800" y="773.500" width="143.500" height="22" rx="2.500" fill="#2e7cf8" stroke="#2264e4" stroke-width="0.800"/><rect x="578.800" y="774.300" width="141.500" height="1.200" fill="#5a9efc" opacity="0.6"/>
<rect x="724" y="773.500" width="144" height="22" rx="2.500" fill="#1a4cc0" stroke="#123a9c" stroke-width="0.800"/>
<rect x="870.300" y="773.500" width="143.500" height="22" rx="2.500" fill="#2e7cf8" stroke="#2264e4" stroke-width="0.800"/><rect x="871.300" y="774.300" width="141.500" height="1.200" fill="#5a9efc" opacity="0.6"/>
</g>
<use href="#ffico" x="295.500" y="777.200"/>
<use href="#pptico" x="441" y="777"/>
<use href="#wordico" x="587.500" y="777.300"/>
<use href="#ffico" x="734" y="777.200"/>
<use href="#xlico" x="879.500" y="777.300"/>
<!-- help / restore -->
<rect x="1025.500" y="778.500" width="12" height="12.500" fill="#fcf8b8" stroke="#202020" stroke-width="1"/><path d="M1034 791 l3.500 2.500 v-3z" fill="#202020"/>
<text x="1031.500" y="789" font-family="Liberation Sans,sans-serif" font-weight="bold" font-size="11" fill="#000" text-anchor="middle">?</text>
<g fill="none" stroke="#fff" stroke-width="1.200"><rect x="1052" y="776.600" width="6" height="3.600"/><rect x="1049.500" y="779" width="6" height="3.600" fill="#245edb"/></g>
<path d="M1050.500 789.300 h5 l-2.500 2.800z" fill="#fff"/>
<!-- tray icons -->
<g>
<ellipse cx="1094" cy="785" rx="7.800" ry="7" fill="#e4e0d0" stroke="#8c887c" stroke-width="0.800"/><ellipse cx="1094" cy="786.500" rx="5.600" ry="4.300" fill="#f4ecd4"/><path d="M1087 781.500 Q1094 776 1101 781.500" fill="#88c040" stroke="#486820" stroke-width="0.600"/><circle cx="1091.800" cy="785.300" r="0.900" fill="#222"/><circle cx="1096.200" cy="785.300" r="0.900" fill="#222"/><path d="M1091.500 788.300 q2.500 1.500 5 0" stroke="#222" stroke-width="0.700" fill="none"/>
<rect x="1105" y="777.500" width="14.500" height="14.500" rx="2" fill="#f4f8fc" stroke="#1c50a8" stroke-width="1"/><circle cx="1109.500" cy="782" r="2.300" fill="none" stroke="#1c58b8" stroke-width="1.600"/><path d="M1111 783.800 L1116.500 789.500 M1114.500 787.500 l1.500 -1.500" stroke="#1c58b8" stroke-width="1.600" fill="none"/>
<path d="M1123.800 777.300 H1136.600 V786 Q1136.600 790.500 1130.200 793 Q1123.800 790.500 1123.800 786Z" fill="#f8d838" stroke="#a88810" stroke-width="0.800"/><path d="M1127 778 V790.500 M1130.200 778 V792.500 M1133.400 778 V790.500" stroke="#c89818" stroke-width="1"/>
<circle cx="1148" cy="785" r="7.800" fill="#58c838" stroke="#d8f4c8" stroke-width="1"/><text x="1147.500" y="789.200" font-family="Liberation Sans,sans-serif" font-weight="bold" font-size="11" fill="#fff" text-anchor="middle">A</text>
<rect x="1158.500" y="777.500" width="15" height="15" fill="#28b8e8" stroke="#0c6cb0" stroke-width="0.800"/><text x="1166" y="790" font-family="Liberation Sans,sans-serif" font-weight="bold" font-size="13" fill="#fff" text-anchor="middle">Z</text>
<circle cx="1182.500" cy="783.500" r="6.300" fill="#888c90" stroke="#484c50" stroke-width="0.800"/><circle cx="1182" cy="783.500" r="3.300" fill="#c8ccd0"/><circle cx="1182" cy="783.500" r="1.500" fill="#505458"/><path d="M1187 792 l3-2.500 M1189 793 l2.500-2" stroke="#b8d8f8" stroke-width="0.800"/>
<text x="1201.800" y="791.400" font-family="Liberation Sans,sans-serif" font-weight="bold" font-size="18.500" fill="#e81020" stroke="#e81020" stroke-width="0.700" text-anchor="middle">N</text>
</g>
</svg>
<div class="t tb" style="left:315.500px;top:8.500px;letter-spacing:-0.2px">BA 213 W11 (Pasc…</div>
<div class="t tb" style="left:460px;top:8.500px;letter-spacing:-0.13px">Microsoft PowerPo…</div>
<div class="t tb" style="left:606px;top:8.500px;letter-spacing:-0.15px">Time_value_of_mo…</div>
<div class="t tb" style="left:753px;top:8.500px;letter-spacing:-0.21px">PVA-PresentValue…</div>
<div class="t tb" style="left:898px;top:8.500px;letter-spacing:-0.1px">Microsoft Excel - r…</div>
<div class="t tb" id="clock" style="left:1216.500px;top:8.500px">11:15 AM</div>
</div>
</div></body></html>
